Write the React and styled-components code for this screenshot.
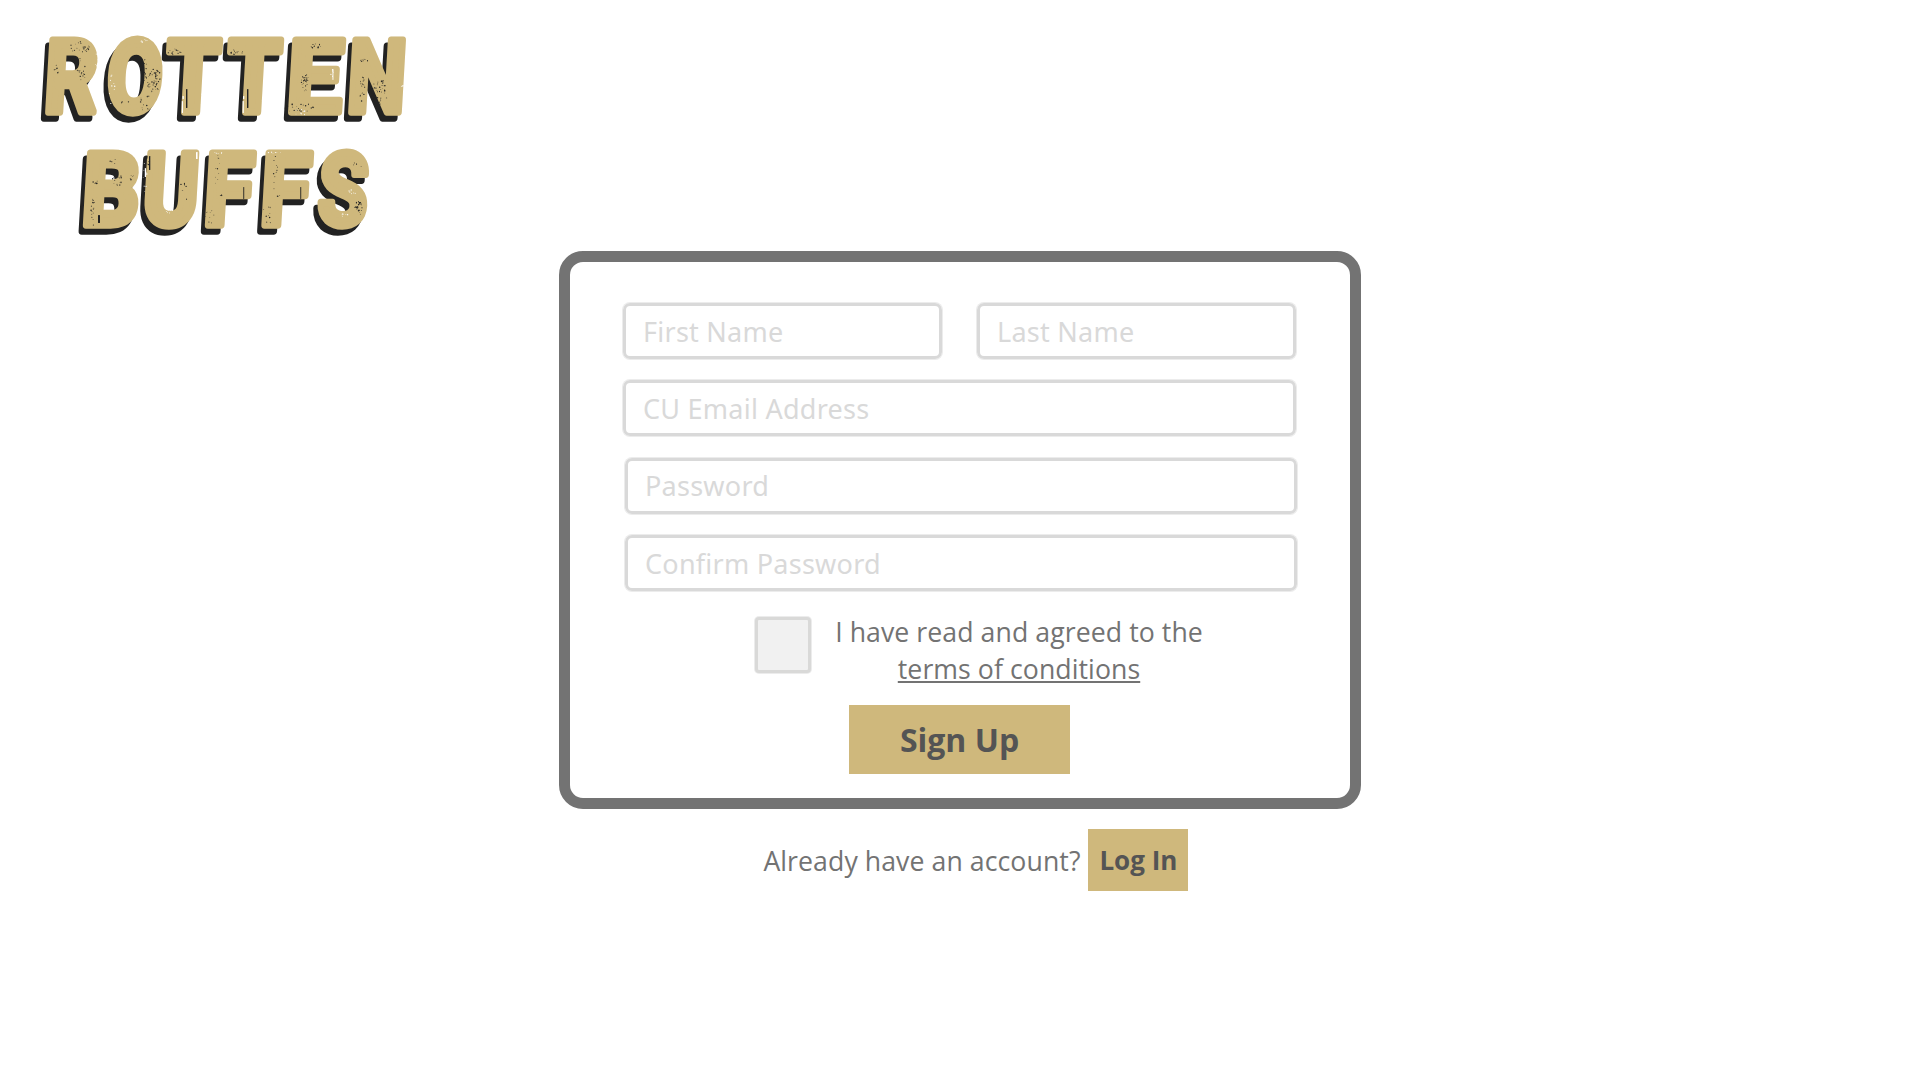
import React from "react";
import styled, { createGlobalStyle } from "styled-components";

const GOLD = "#cfb87c";
const INK = "#222222";
const GREY = "#737373";
const LINE = "#d9d9d9";

const GlobalStyle = createGlobalStyle`
  * { box-sizing: border-box; }
  body { margin: 0; background: #fff; }
`;

const Page = styled.div`
  width: 1920px;
  height: 1080px;
  overflow: hidden;
  background: #fff;
  font-family: "Open Sans", "Noto Sans", sans-serif;
  color: ${GREY};
`;

const Header = styled.header`
  height: 251px;
`;

const LogoArt = styled.svg`
  display: block;
  overflow: visible;
`;

const LogoWord = styled.text`
  font-family: Roboto, "Liberation Sans", sans-serif;
  font-weight: 700;
  font-size: 101px;
  stroke-width: 7.5px;
  stroke-linejoin: round;
`;

const Card = styled.form`
  width: 802px;
  height: 558px;
  margin: 0 0 0 559px;
  border: 11px solid ${GREY};
  border-radius: 24px;
  padding: 40px 51px 0 52px;
  display: flex;
  flex-direction: column;
`;

const Fields = styled.div`
  display: flex;
  flex-direction: column;
  gap: 19.4px;
`;

const NameRow = styled.div`
  display: flex;
  gap: 33px;
`;

const Field = styled.div`
  width: ${(p) => p.$width - 2}px;
  height: 56px;
  margin: 1px 1px 1px ${(p) => 1 + (p.$indent || 0)}px;
  border: 3px solid ${LINE};
  border-radius: 7px;
  box-shadow: 0 0 0 1px #ececec;
  padding: 1px 0 0 17px;
  display: flex;
  align-items: center;
  flex-shrink: 0;
  font-family: "Noto Sans", "Open Sans", sans-serif;
  font-weight: 400;
  font-size: 27px;
  line-height: 38px;
  letter-spacing: 0.25px;
  white-space: nowrap;
  color: ${LINE};
`;

const Agreement = styled.div`
  display: flex;
  margin: 24px 0 0 132px;
  gap: 24px;
`;

const CheckBox = styled.div`
  width: 56px;
  height: 56px;
  margin: 1px 0 1px 1px;
  border: 3px solid #d9d9d8;
  border-radius: 4px;
  box-shadow: 0 0 0 1px #ececec;
  background: #f1f1f1;
`;

const Terms = styled.p`
  margin: -3px 0 0;
  width: 368px;
  text-align: center;
  font-size: 26.67px;
  line-height: 37px;
  letter-spacing: 0.07px;
  white-space: nowrap;
`;

const TermsLink = styled.span`
  text-decoration: underline;
`;

const Button = styled.div`
  width: ${(p) => p.$width}px;
  height: ${(p) => p.$height}px;
  background: ${GOLD};
  color: #545454;
  font-weight: 700;
  font-size: ${(p) => p.$size}px;
  line-height: 1;
  display: flex;
  align-items: center;
  justify-content: center;
  white-space: nowrap;
`;

const SubmitRow = styled.div`
  display: flex;
  padding-left: 227px;
  margin-top: 18px;
`;

const LoginRow = styled.div`
  display: flex;
  align-items: center;
  margin: 20px 0 0 763.4px;
`;

const LoginPrompt = styled.span`
  width: 325px;
  font-size: 26.67px;
  line-height: 37px;
  letter-spacing: 0.07px;
  white-space: nowrap;
`;

// Glyph metrics in font units: [advance, left edge, right edge]
const METRICS = {
  R: [1292, 117, 1262],
  O: [1396, 84, 1312],
  T: [1264, 42, 1222],
  E: [1145, 117, 1082],
  N: [1434, 117, 1315],
  B: [1301, 117, 1215],
  U: [1345, 101, 1244],
  F: [1125, 117, 1069],
  S: [1259, 58, 1190],
};

// Each letter: [character, left edge, right edge]
const WORDS = [
  {
    id: "rotten",
    baseline: 112,
    letters: [["R", 44, 102], ["O", 105, 165], ["T", 162, 223.5], ["T", 223, 284.5], ["E", 287.5, 345.5], ["N", 347, 407]],
  },
  {
    id: "buffs",
    baseline: 225,
    letters: [["B", 82, 142], ["U", 142, 200.5], ["F", 204, 257], ["F", 260.5, 314], ["S", 315, 371]],
  },
];

const fitLetter = ([ch, left, right]) => {
  const [advance, l, r] = METRICS[ch];
  const unit = (right - left - 11.5) / (r - l);
  return { ch, x: left + 3.7 - l * unit, length: advance * unit };
};

// Worn patches: [centre x, centre y, radius x, radius y, count, colour]
const PATCHES = [
  [80, 47, 10, 6, 26, INK], [81, 70, 5, 12, 22, INK], [57, 69, 3, 4, 7, INK], [97, 60, 2, 9, 8, "#fff"],
  [154, 80, 7, 12, 46, INK], [144, 70, 3, 14, 22, INK], [146, 103, 7, 8, 12, INK], [144, 41, 4, 2, 8, "#fff"],
  [125, 101, 4, 3, 4, INK], [112, 90, 3, 16, 9, "#fff"],
  [175, 52, 7, 3, 13, INK], [236, 52, 7, 3, 13, INK], [203, 105, 2, 14, 11, "#fff"], [264, 105, 2, 14, 11, "#fff"],
  [317, 46, 6, 3, 12, INK], [305, 82, 4, 9, 28, INK], [300, 108, 16, 5, 28, INK], [332, 73, 2, 5, 5, "#fff"], [300, 112, 8, 3, 8, "#fff"],
  [365, 60, 5, 2, 8, INK], [362, 90, 3, 14, 18, INK], [380, 92, 8, 13, 42, INK], [402, 86, 2, 1, 3, "#fff"],
  [117, 180, 5, 7, 18, INK], [93, 211, 2, 15, 17, INK], [96, 182, 3, 2, 6, INK], [113, 161, 3, 3, 4, INK], [133, 178, 4, 3, 5, INK],
  [148, 164, 2, 11, 9, INK], [145, 177, 2, 15, 10, "#fff"], [184, 193, 5, 14, 6, INK], [169, 211, 4, 2, 6, "#fff"],
  [218, 174, 3, 20, 10, INK], [210, 215, 5, 10, 9, INK], [222, 196, 2, 1, 4, INK], [218, 153, 8, 1, 6, "#fff"],
  [275, 174, 3, 20, 10, INK], [267, 215, 5, 10, 9, INK], [279, 196, 2, 1, 4, INK], [275, 153, 8, 1, 6, "#fff"],
  [359, 208, 4, 7, 26, INK], [352, 192, 4, 3, 7, "#fff"], [357, 165, 5, 5, 5, INK], [345, 216, 7, 4, 6, "#fff"],
];

// Long scratches: [x, y, width, height, colour]
const SCRATCHES = [
  [182.5, 96, 1.3, 3, "#fff"], [181.8, 101, 1.2, 12, "#fff"], [186, 89, 1.4, 19, INK],
  [243, 96, 1.3, 3, "#fff"], [242.6, 101, 1.2, 12, "#fff"], [247, 89, 1.4, 19, INK],
  [332.5, 69, 0.9, 11, "#fff"], [149, 156, 1.3, 14, INK], [196, 152, 1.6, 7, "#fff"],
  [243.3, 187, 0.9, 12, INK], [300.3, 187, 0.9, 12, INK], [98, 215, 2, 8, INK], [144.8, 168, 1.2, 9, "#fff"],
];

const makeSpecks = () => {
  let seed = 17;
  const rand = () => {
    seed = (seed * 16807) % 2147483647;
    return seed / 2147483647;
  };
  return PATCHES.flatMap(([cx, cy, rx, ry, count, fill]) =>
    Array.from({ length: count }, () => {
      const angle = rand() * Math.PI * 2;
      const reach = Math.sqrt(rand());
      return {
        cx: cx + Math.cos(angle) * rx * reach,
        cy: cy + Math.sin(angle) * ry * reach,
        rx: 0.25 + rand() * 0.5,
        ry: 0.25 + rand() * 0.6,
        fill,
      };
    })
  );
};

const SPECKS = makeSpecks();

function WordLayer({ color, dx = 0, dy = 0, hidden }) {
  return WORDS.map(({ id, baseline, letters }) => (
    <LogoWord
      key={id}
      fill={color}
      stroke={color}
      aria-hidden={hidden}
      transform={`translate(${dx} ${baseline + dy}) skewX(-3.3)`}
    >
      {letters.map(fitLetter).map(({ ch, x, length }, i) => (
        <tspan key={i} x={x} y="0" textLength={length} lengthAdjust="spacingAndGlyphs">
          {ch}
        </tspan>
      ))}
    </LogoWord>
  ));
}

function Logo() {
  return (
    <LogoArt width="440" height="251" viewBox="0 0 440 251">
      <WordLayer color={INK} dx={-4.2} dy={5.6} hidden />
      <WordLayer color={GOLD} />
      {SPECKS.map((speck, i) => (
        <ellipse key={i} {...speck} />
      ))}
      {SCRATCHES.map(([x, y, width, height, fill], i) => (
        <rect key={i} x={x} y={y} width={width} height={height} rx="0.5" fill={fill} />
      ))}
    </LogoArt>
  );
}

export default function App() {
  return (
    <Page>
      <GlobalStyle />
      <Header>
        <Logo />
      </Header>
      <Card>
        <Fields>
          <NameRow>
            <Field $width={321}>First Name</Field>
            <Field $width={321}>Last Name</Field>
          </NameRow>
          <Field $width={675}>CU Email Address</Field>
          <Field $width={674} $indent={2}>Password</Field>
          <Field $width={674} $indent={2}>Confirm Password</Field>
        </Fields>
        <Agreement>
          <CheckBox />
          <Terms>
            I have read and agreed to the
            <br />
            <TermsLink>terms of conditions</TermsLink>
          </Terms>
        </Agreement>
        <SubmitRow>
          <Button $width={221} $height={69} $size={32}>Sign Up</Button>
        </SubmitRow>
      </Card>
      <LoginRow>
        <LoginPrompt>Already have an account?</LoginPrompt>
        <Button $width={100} $height={62} $size={26}>Log In</Button>
      </LoginRow>
    </Page>
  );
}
